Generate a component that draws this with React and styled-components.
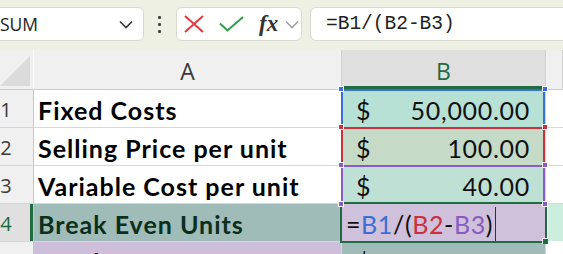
import React from 'react';
import styled, { createGlobalStyle } from 'styled-components';

const Global = createGlobalStyle`
  html, body { margin: 0; padding: 0; overflow: hidden; background: #fff; }
  #root { width: 563px; height: 254px; overflow: hidden; }
`;

const Page = styled.div`
  width: 563px;
  height: 254px;
  overflow: hidden;
  display: flex;
  flex-direction: column;
  background: #fff;
`;

const TopBar = styled.div`
  height: 50px;
  flex: none;
  box-sizing: border-box;
  padding-top: 7px;
  display: flex;
  align-items: flex-start;
  background: #eef0e4;
`;

const Box = styled.div`
  box-sizing: border-box;
  height: 34px;
  background: #fff;
  border: 1px solid #d8dad0;
  border-radius: 6px;
  display: flex;
  align-items: center;
`;

const NameBox = styled(Box)`
  margin-left: -12px;
  width: 156px;
  padding: 0 10px 0 11px;
  justify-content: space-between;
  font-family: "Open Sans", sans-serif;
  font-size: 17.5px;
  color: #222;
`;

const Dots = styled.div`
  margin: 9px 0 0 14px;
  display: flex;
  flex-direction: column;
  gap: 4px;
  span {
    width: 3px;
    height: 3px;
    background: #444;
    border-radius: 1px;
  }
`;

const Buttons = styled(Box)`
  margin-left: 15px;
  width: 126px;
  padding-left: 7px;
`;

const Fx = styled.span`
  font-family: "Liberation Serif", serif;
  font-style: italic;
  font-weight: 700;
  font-size: 23px;
  color: #333;
  margin-left: 15px;
  line-height: 1;
  margin-top: -2px;
`;

const FormulaBox = styled(Box)`
  margin-left: 8px;
  flex: 1;
  margin-right: -20px;
  padding-left: 15px;
  font-family: "Liberation Mono", monospace;
  font-size: 19.5px;
  color: #222;
`;

const Sheet = styled.div`
  display: grid;
  grid-template-columns: 34px 308px 204px 1fr;
  grid-template-rows: 40px repeat(5, 38px);
`;

const Corner = styled.div`
  box-sizing: border-box;
  background: #f0f0f0;
  border-right: 1px solid #fafafa;
  border-bottom: 1px solid #cdcdcd;
  display: flex;
  align-items: flex-end;
  padding: 0 0 3px 0;
  svg { display: block; }
`;

const ColHeader = styled.div`
  box-sizing: border-box;
  background: ${p => (p.$sel ? '#e0e0e0' : '#f0f0f0')};
  border-right: 1px solid #cfcfcf;
  border-bottom: 1px solid #cdcdcd;
  box-shadow: ${p => (p.$sel ? 'inset 0 -3px 0 #1f6b42' : 'none')};
  display: flex;
  align-items: center;
  justify-content: center;
  padding-top: 2px;
  font-family: "Open Sans", sans-serif;
  font-size: 23px;
  color: ${p => (p.$sel ? '#1f6b42' : '#3a3a3a')};
`;

const RowHeader = styled.div`
  box-sizing: border-box;
  background: ${p => (p.$sel ? '#e0e0e0' : '#f0f0f0')};
  border-right: 1px solid #c6c6c6;
  border-bottom: 1px solid #d6d6d6;
  box-shadow: ${p => (p.$sel ? 'inset -3px 0 0 #1f6b42' : 'none')};
  display: flex;
  align-items: center;
  font-family: "Open Sans", sans-serif;
  font-size: 20px;
  color: ${p => (p.$sel ? '#1f6b42' : '#3a3a3a')};
  span {
    width: 12px;
    text-align: center;
    margin-top: 2px;
  }
`;

const LabelCell = styled.div`
  box-sizing: border-box;
  background: ${p => p.$bg || '#fff'};
  border-right: 1px solid #d4d4d4;
  border-bottom: 1px solid #d8d8d8;
  display: flex;
  align-items: center;
  padding: 2px 0 0 4px;
  font-family: Lato, sans-serif;
  font-weight: 700;
  font-size: 25px;
  letter-spacing: 1px;
  color: ${p => p.$ink || '#000'};
  white-space: nowrap;
  overflow: hidden;
`;

const ValueCell = styled.div`
  position: relative;
  box-sizing: border-box;
  background: ${p => p.$bg};
  border-right: 1px solid #d4d4d4;
  border-bottom: 1px solid #d8d8d8;
  display: flex;
  align-items: center;
  justify-content: space-between;
  padding: 2px 15px 0 14px;
  font-family: Lato, sans-serif;
  font-size: 25px;
  letter-spacing: 0.7px;
  color: #111;
  white-space: nowrap;
  &::after {
    content: '';
    display: ${p => (p.$ref ? 'block' : 'none')};
    position: absolute;
    left: -1px;
    right: 0;
    top: -1px;
    bottom: 0;
    border: 2px solid ${p => p.$ref};
    border-bottom: none;
    z-index: 1;
    pointer-events: none;
  }
`;

const ActiveCell = styled.div`
  position: relative;
  box-sizing: border-box;
  background: #cfc0db;
  border-right: 1px solid #d4d4d4;
  border-bottom: 1px solid #d8d8d8;
  display: flex;
  align-items: center;
  padding: 2px 0 0 4px;
  font-family: Lato, sans-serif;
  font-size: 25px;
  letter-spacing: 0.6px;
  color: #111;
  white-space: nowrap;
  &::after {
    content: '';
    position: absolute;
    left: -2px;
    right: -2px;
    top: -2px;
    bottom: -2px;
    border: 2px solid #1f6b42;
    z-index: 2;
    pointer-events: none;
  }
`;

const Caret = styled.span`
  display: inline-block;
  width: 1px;
  height: 35px;
  background: #333;
  margin-left: 2px;
  margin-top: 2px;
`;

const Ref = styled.span`
  color: ${p => p.$c};
`;

const Handle = styled.span`
  position: absolute;
  width: 4px;
  height: 4px;
  background: ${p => p.$c};
  border: 1px solid #fff;
  z-index: 3;
  ${p => (p.$x === 'l' ? 'left: -4px;' : 'right: -3px;')}
  ${p => (p.$y === 't' ? 'top: -4px;' : 'bottom: -4px;')}
`;

const EndHandle = styled.span`
  position: absolute;
  right: -3px;
  bottom: -3px;
  width: 5px;
  height: 5px;
  background: #1f6b42;
  border-left: 1px solid #fff;
  border-top: 1px solid #fff;
  z-index: 3;
`;

const PlainCell = styled.div`
  box-sizing: border-box;
  background: ${p => p.$bg || '#fff'};
  border-bottom: 1px solid ${p => (p.$bg ? '#fff' : '#d8d8d8')};
  margin-left: ${p => (p.$bg ? '2px' : '0')};
`;

const BLUE = '#3a6fd6';
const RED = '#c9313c';
const PURPLE = '#8a5bc0';

const rows = [
  { n: 1, label: 'Fixed Costs', bg: '#b8e1d5', val: '50,000.00', ref: BLUE },
  { n: 2, label: 'Selling Price per unit', bg: '#c5dbc7', val: '100.00', ref: RED },
  { n: 3, label: 'Variable Cost per unit', bg: '#bfe0d5', val: '40.00', ref: PURPLE },
];

function Chevron({ color = '#333', w = 14 }) {
  return (
    <svg width={w} height="9" viewBox="0 0 14 9">
      <path d="M1 1.5 L7 7.5 L13 1.5" fill="none" stroke={color} strokeWidth="1.6" />
    </svg>
  );
}

export default function App() {
  return (
    <Page>
      <Global />
      <TopBar>
        <NameBox>
          <span>SUM</span>
          <Chevron />
        </NameBox>
        <Dots>
          <span />
          <span />
          <span />
        </Dots>
        <Buttons>
          <svg width="20" height="18" viewBox="0 0 20 18">
            <path d="M1 1 L19 17 M19 1 L1 17" stroke="#e5383f" strokeWidth="2" fill="none" />
          </svg>
          <svg width="25" height="16" viewBox="0 0 25 16" style={{ marginLeft: 15 }}>
            <path d="M1 7.5 L8.5 14.5 L24 1" stroke="#2f9e48" strokeWidth="2" fill="none" />
          </svg>
          <Fx>fx</Fx>
          <span style={{ marginLeft: 7, display: 'flex' }}>
            <Chevron color="#a3a3a3" />
          </span>
        </Buttons>
        <FormulaBox>=B1/(B2-B3)</FormulaBox>
      </TopBar>
      <Sheet>
        <Corner>
          <svg width="31" height="30" viewBox="0 0 31 30">
            <path d="M30 0 L30 30 L0 30 Z" fill="#dbdbdb" />
          </svg>
        </Corner>
        <ColHeader>A</ColHeader>
        <ColHeader $sel>B</ColHeader>
        <ColHeader />

        {rows.map(r => (
          <React.Fragment key={r.n}>
            <RowHeader><span>{r.n}</span></RowHeader>
            <LabelCell>{r.label}</LabelCell>
            <ValueCell $bg={r.bg} $ref={r.ref}>
              <span>$</span>
              <span>{r.val}</span>
              <Handle $c={r.ref} $x="l" $y="t" />
              <Handle $c={r.ref} $x="r" $y="t" />
              {r.n === 3 && <Handle $c={r.ref} $x="l" $y="b" />}
              {r.n === 3 && <Handle $c={r.ref} $x="r" $y="b" />}
            </ValueCell>
            <PlainCell />
          </React.Fragment>
        ))}

        <RowHeader $sel><span>4</span></RowHeader>
        <LabelCell $bg="#9fbcb8" $ink="#0b2f1a">Break Even Units</LabelCell>
        <ActiveCell>
          <span>=</span>
          <Ref $c={BLUE}>B1</Ref>
          <span>/(</span>
          <Ref $c={RED}>B2</Ref>
          <span>-</span>
          <Ref $c={PURPLE}>B3</Ref>
          <span>)</span>
          <Caret />
          <EndHandle />
        </ActiveCell>
        <PlainCell $bg="#cceedd" />

        <RowHeader><span>5</span></RowHeader>
        <LabelCell $bg="#cdbfdc" $ink="#1a1a1a">Break Even Revenue</LabelCell>
        <ValueCell $bg="#9fbcb8">
          <span>$</span>
          <span>83,333.33</span>
        </ValueCell>
        <PlainCell />
      </Sheet>
    </Page>
  );
}
